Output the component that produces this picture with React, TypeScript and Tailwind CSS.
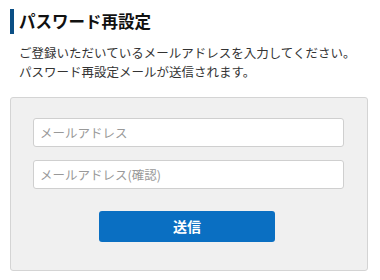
import React from "react";

const font = {
  fontFamily: '"Noto Sans CJK JP", "Noto Sans", sans-serif',
};

export default function App() {
  return (
    <div className="w-[380px] h-[280px] bg-white text-[#222]" style={font}>
      <div className="pt-[9px] pl-[10px] pr-3">
        {/* Heading */}
        <div className="flex items-center h-[25px] border-l-4 border-[#0b4f85] pl-[5px]">
          <h1 className="text-[16.5px] font-bold leading-none text-[#111]">
            パスワード再設定
          </h1>
        </div>

        {/* Description */}
        <div className="mt-[9px] pl-[9px] text-[12.5px] leading-[19px] text-[#333]">
          <p>ご登録いただいているメールアドレスを入力してください。</p>
          <p>パスワード再設定メールが送信されます。</p>
        </div>

        {/* Form panel */}
        <div className="mt-[16px] w-[358px] h-[174px] bg-[#f0f0f0] border border-[#d4d4d4] rounded-[3px] pt-[20px] px-[22px]">
          <div className="flex flex-col gap-[13px]">
            <input
              type="text"
              placeholder="メールアドレス"
              className="w-[311px] h-[29px] bg-white border border-[#cfcfcf] rounded-[3px] px-[6px] text-[12.5px] placeholder:text-[#999] outline-none"
              style={font}
            />
            <input
              type="text"
              placeholder="メールアドレス(確認)"
              className="w-[311px] h-[29px] bg-white border border-[#cfcfcf] rounded-[3px] px-[6px] text-[12.5px] placeholder:text-[#999] outline-none"
              style={font}
            />
          </div>
          <div className="flex justify-center mt-[22px] pr-[4px]">
            <button
              type="button"
              className="w-[176px] h-[31px] bg-[#0a6fc2] rounded-[3px] text-white text-[14px] font-bold"
              style={font}
            >
              送信
            </button>
          </div>
        </div>
      </div>
    </div>
  );
}
